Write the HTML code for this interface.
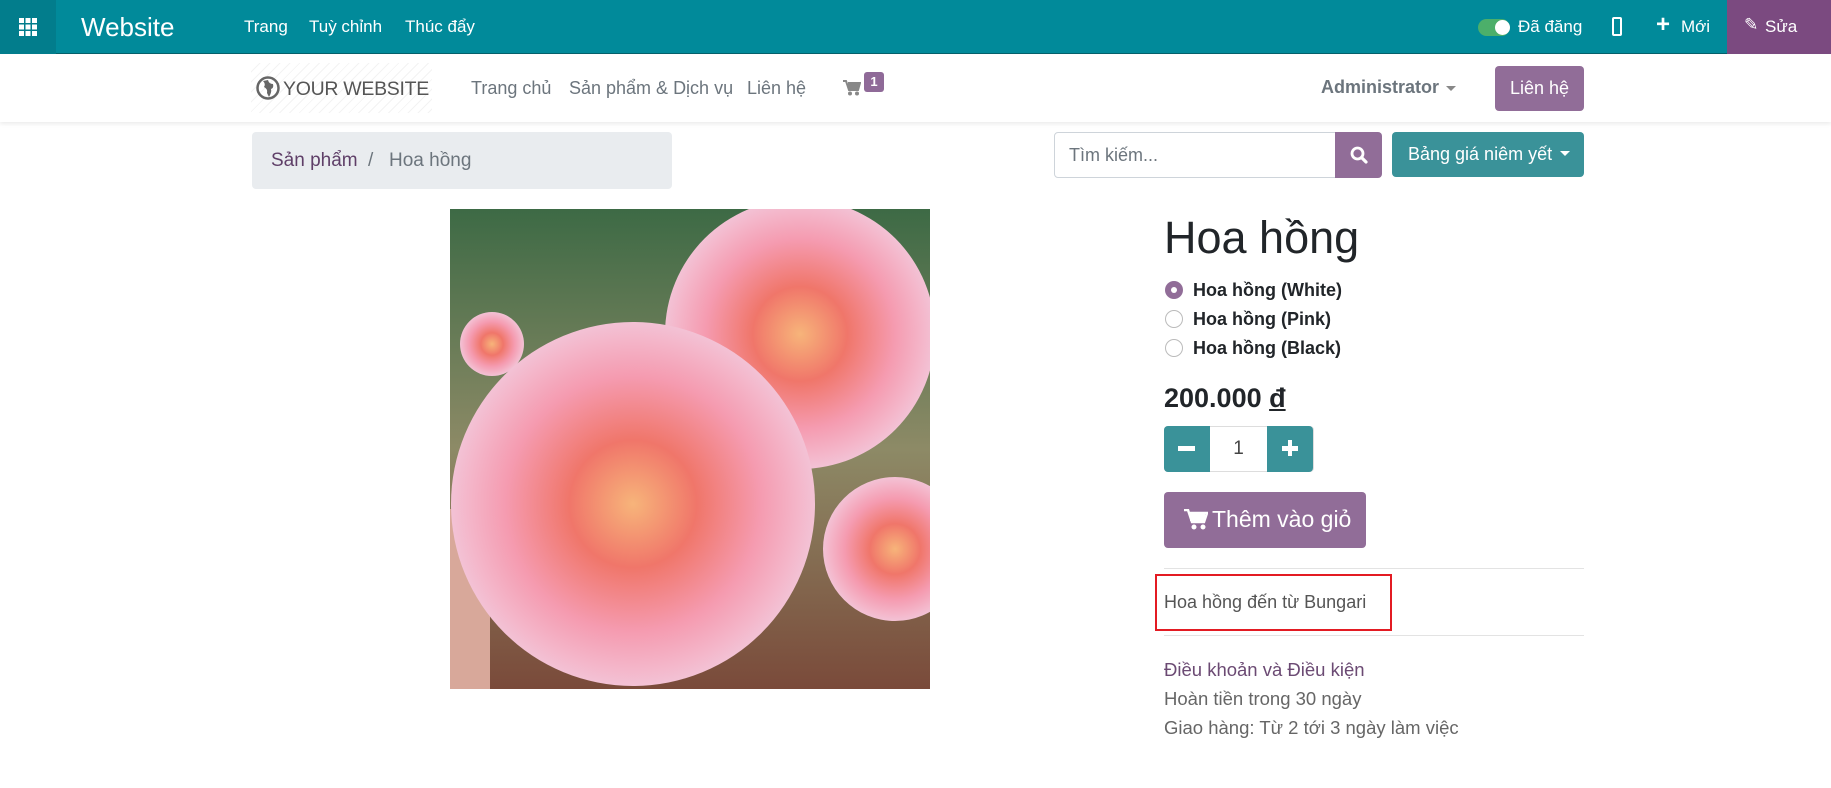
<!DOCTYPE html>
<html><head><meta charset="utf-8"><style>
*{box-sizing:border-box;margin:0;padding:0}
body{width:1831px;height:788px;overflow:hidden;background:#fff;font-family:"Liberation Sans",sans-serif;position:relative;color:#212529}
.a{position:absolute;white-space:nowrap}
</style></head><body>
<div class="a" style="left:0;top:0;width:1831px;height:54px;background:#018a9a;border-bottom:1px solid #05606b"></div>
<div class="a" style="left:0;top:0;width:56px;height:54px;background:#027d8c"></div>
<svg class="a" style="left:19px;top:18px" width="18" height="18" viewBox="0 0 18 18" fill="#fff"><rect x="0" y="0" width="5" height="5"/><rect x="6.5" y="0" width="5" height="5"/><rect x="13" y="0" width="5" height="5"/><rect x="0" y="6.5" width="5" height="5"/><rect x="6.5" y="6.5" width="5" height="5"/><rect x="13" y="6.5" width="5" height="5"/><rect x="0" y="13" width="5" height="5"/><rect x="6.5" y="13" width="5" height="5"/><rect x="13" y="13" width="5" height="5"/></svg>
<div class="a" style="left:81px;top:12px;font-size:26px;color:#fff">Website</div>
<div class="a" style="left:244px;top:17px;font-size:17px;color:#fff">Trang</div>
<div class="a" style="left:309px;top:17px;font-size:17px;color:#fff">Tuỳ chỉnh</div>
<div class="a" style="left:405px;top:17px;font-size:17px;color:#fff">Thúc đẩy</div>
<div class="a" style="left:1478px;top:19px;width:32px;height:17px;border-radius:9px;background:#4caf6a"></div>
<div class="a" style="left:1495px;top:20px;width:15px;height:15px;border-radius:50%;background:#fff"></div>
<div class="a" style="left:1518px;top:17px;font-size:17px;color:#fff">Đã đăng</div>
<div class="a" style="left:1612px;top:17px;width:10px;height:19px;border:2px solid #fff;border-radius:2px"></div>
<div class="a" style="left:1656px;top:11px;font-size:24px;font-weight:bold;color:#fff">+</div>
<div class="a" style="left:1681px;top:17px;font-size:17px;color:#fff">Mới</div>
<div class="a" style="left:1727px;top:0;width:104px;height:54px;background:#7b4a80"></div>
<div class="a" style="left:1744px;top:15px;font-size:17px;color:#fff">✎</div>
<div class="a" style="left:1765px;top:17px;font-size:17px;color:#fff">Sửa</div>

<div class="a" style="left:0;top:55px;width:1831px;height:67px;background:#fff;box-shadow:0 2px 4px rgba(0,0,0,.08)"></div>
<div class="a" style="left:251px;top:63px;width:181px;height:50px;background:repeating-linear-gradient(135deg,#fff 0 6px,#f3f3f3 6px 7px)"></div>
<svg class="a" style="left:256px;top:76px" width="24" height="24" viewBox="0 0 24 24"><circle cx="12" cy="12" r="10.5" fill="none" stroke="#666" stroke-width="2.5"/><path d="M7 5 Q10 8 8 11 Q12 13 11 17 L13 21 Q16 16 15 13 Q18 12 17 8 Q13 8 12 4Z" fill="#666"/></svg>
<div class="a" style="left:283px;top:78px;font-size:19.5px;color:#555;letter-spacing:-0.3px">YOUR WEBSITE</div>
<div class="a" style="left:471px;top:78px;font-size:18px;color:#6c757d">Trang chủ</div>
<div class="a" style="left:569px;top:78px;font-size:18px;color:#6c757d">Sản phẩm &amp; Dịch vụ</div>
<div class="a" style="left:747px;top:78px;font-size:18px;color:#6c757d">Liên hệ</div>
<svg class="a" style="left:843px;top:80px" width="18" height="16" viewBox="0 0 18 16" fill="#888"><path d="M0 1h3l3 9h9l2-7H5" stroke="#888" stroke-width="2" fill="none"/><rect x="5" y="3" width="11" height="6"/><circle cx="7" cy="13.5" r="2"/><circle cx="14" cy="13.5" r="2"/></svg>
<div class="a" style="left:864px;top:72px;width:20px;height:20px;border-radius:3px;background:#8f6a98;color:#fff;font-size:13px;font-weight:bold;text-align:center;line-height:20px">1</div>
<div class="a" style="left:1321px;top:77px;font-size:18px;font-weight:bold;color:#6c757d">Administrator</div>
<div class="a" style="left:1446px;top:86px;border:5px solid transparent;border-top-color:#888"></div>
<div class="a" style="left:1495px;top:66px;width:89px;height:45px;border-radius:4px;background:#916d98;color:#fff;font-size:18px;text-align:center;line-height:45px">Liên hệ</div>

<div class="a" style="left:252px;top:132px;width:420px;height:57px;border-radius:4px;background:#e9ecef"></div>
<div class="a" style="left:271px;top:150px;font-size:19px;color:#5f3f68">Sản phẩm</div>
<div class="a" style="left:368px;top:150px;font-size:19px;color:#6c757d">/</div>
<div class="a" style="left:389px;top:150px;font-size:19px;color:#6c757d">Hoa hồng</div>

<div class="a" style="left:1054px;top:132px;width:283px;height:46px;border:1px solid #ced4da;border-radius:4px 0 0 4px"></div>
<div class="a" style="left:1069px;top:145px;font-size:18px;color:#6c757d">Tìm kiếm...</div>
<div class="a" style="left:1335px;top:132px;width:47px;height:46px;border-radius:0 4px 4px 0;background:#916d98"></div>
<svg class="a" style="left:1350px;top:146px" width="18" height="18" viewBox="0 0 18 18"><circle cx="7.5" cy="7.5" r="5.5" fill="none" stroke="#fff" stroke-width="2.8"/><path d="M11.5 11.5 L16 16" stroke="#fff" stroke-width="3.2" stroke-linecap="round"/></svg>
<div class="a" style="left:1392px;top:132px;width:192px;height:45px;border-radius:4px;background:#3a9299"></div>
<div class="a" style="left:1408px;top:144px;font-size:18px;color:#fff">Bảng giá niêm yết</div>
<div class="a" style="left:1560px;top:151px;border:5px solid transparent;border-top-color:#fff"></div>

<svg class="a" style="left:450px;top:209px" width="480" height="480" viewBox="0 0 480 480">
<defs>
<radialGradient id="r1"><stop offset="0" stop-color="#f7b47a"/><stop offset=".35" stop-color="#f0766a"/><stop offset=".7" stop-color="#f59bb0"/><stop offset="1" stop-color="#f3c2d5"/></radialGradient>
<linearGradient id="bg" x1="0" y1="0" x2="0" y2="1"><stop offset="0" stop-color="#3d6a45"/><stop offset=".5" stop-color="#8d8a66"/><stop offset="1" stop-color="#7a4a3a"/></linearGradient>
</defs>
<rect width="480" height="480" fill="url(#bg)"/>
<rect x="0" y="300" width="40" height="180" fill="#d8a89a"/>
<circle cx="42" cy="135" r="32" fill="url(#r1)"/>
<circle cx="445" cy="340" r="72" fill="url(#r1)"/>
<circle cx="350" cy="125" r="135" fill="url(#r1)"/>
<circle cx="183" cy="295" r="182" fill="url(#r1)"/>
</svg>

<div class="a" style="left:1164px;top:212px;font-size:45px;color:#212529">Hoa hồng</div>
<div class="a" style="left:1165px;top:281px;width:18px;height:18px;border-radius:50%;background:#916d98"></div>
<div class="a" style="left:1171px;top:287px;width:6px;height:6px;border-radius:50%;background:#fff"></div>
<div class="a" style="left:1165px;top:310px;width:18px;height:18px;border-radius:50%;border:1px solid #bbb"></div>
<div class="a" style="left:1165px;top:339px;width:18px;height:18px;border-radius:50%;border:1px solid #bbb"></div>
<div class="a" style="left:1193px;top:280px;font-size:18px;font-weight:bold">Hoa hồng (White)</div>
<div class="a" style="left:1193px;top:309px;font-size:18px;font-weight:bold">Hoa hồng (Pink)</div>
<div class="a" style="left:1193px;top:338px;font-size:18px;font-weight:bold">Hoa hồng (Black)</div>
<div class="a" style="left:1164px;top:383px;font-size:27px;font-weight:bold">200.000 <u>đ</u></div>
<div class="a" style="left:1164px;top:426px;width:150px;height:46px;border:1px solid #ddd;border-radius:4px"></div>
<div class="a" style="left:1164px;top:426px;width:46px;height:46px;border-radius:4px 0 0 4px;background:#3a9299"></div>
<div class="a" style="left:1178px;top:446px;width:17px;height:5px;background:#fff"></div>
<div class="a" style="left:1210px;top:438px;width:57px;text-align:center;font-size:19px;color:#444">1</div>
<div class="a" style="left:1267px;top:426px;width:46px;height:46px;border-radius:0 4px 4px 0;background:#3a9299"></div>
<div class="a" style="left:1282px;top:446px;width:16px;height:5px;background:#fff"></div>
<div class="a" style="left:1288px;top:440px;width:4px;height:16px;background:#fff"></div>
<div class="a" style="left:1164px;top:492px;width:202px;height:56px;border-radius:4px;background:#916d98"></div>
<svg class="a" style="left:1184px;top:509px" width="24" height="22" viewBox="0 0 24 22" fill="#fff"><path d="M0 1h4l4 12h12l3-9H6" stroke="#fff" stroke-width="2.5" fill="none"/><rect x="6" y="4" width="15" height="8"/><circle cx="10" cy="18" r="2.5"/><circle cx="19" cy="18" r="2.5"/></svg>
<div class="a" style="left:1212px;top:506px;font-size:23px;color:#fff">Thêm vào giỏ</div>
<div class="a" style="left:1164px;top:568px;width:420px;height:1px;background:#e3e3e3"></div>
<div class="a" style="left:1155px;top:574px;width:237px;height:57px;border:2px solid #e31b23"></div>
<div class="a" style="left:1164px;top:592px;font-size:18px;color:#555">Hoa hồng đến từ Bungari</div>
<div class="a" style="left:1164px;top:635px;width:420px;height:1px;background:#e3e3e3"></div>
<div class="a" style="left:1164px;top:659px;font-size:18.5px;color:#6b4a73">Điều khoản và Điều kiện</div>
<div class="a" style="left:1164px;top:688px;font-size:18.5px;color:#666">Hoàn tiền trong 30 ngày</div>
<div class="a" style="left:1164px;top:717px;font-size:18.5px;color:#666">Giao hàng: Từ 2 tới 3 ngày làm việc</div>
</body></html>
